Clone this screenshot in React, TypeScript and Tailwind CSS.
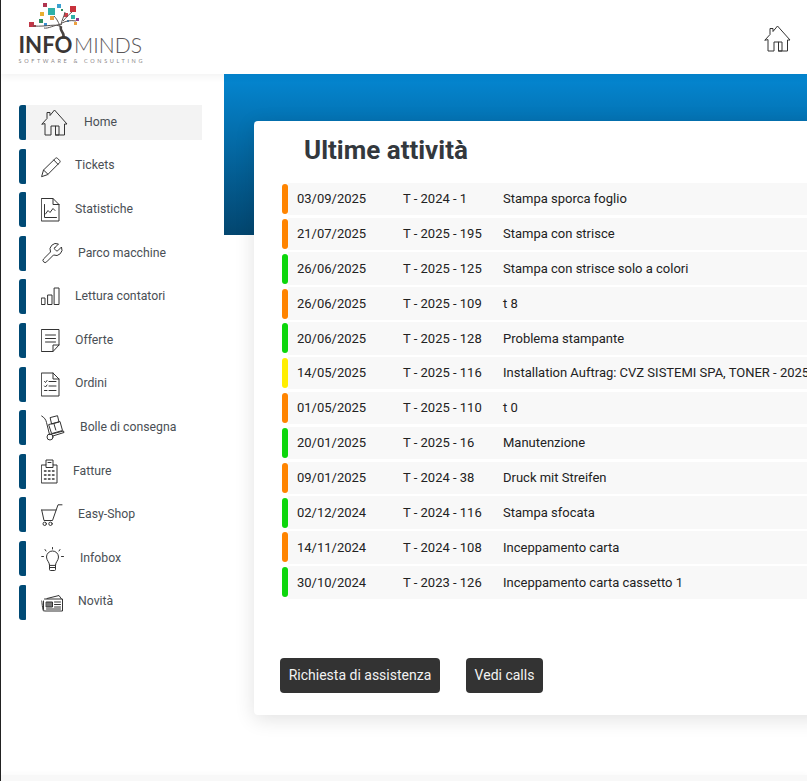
import React from "react";

const stroke = { fill: "none", stroke: "#333", strokeWidth: 1, strokeLinejoin: "round" as const, strokeLinecap: "round" as const };

function HomeIcon() {
  return (
    <svg width="27" height="27" viewBox="0 0 27 27" {...stroke}>
      <path d="M1 15 L6 9.500 V3.500 H9 V6.500 L13.500 1 L26 15 H23.500 V26 H14.500 V17 H10 V26 H4 V15 Z" />
      <path d="M14.500 26 H18 V17 H14.500" />
    </svg>
  );
}

const icons: Record<string, React.ReactNode> = {
  Home: <HomeIcon />,
  Tickets: (
    <svg width="27" height="27" viewBox="0 0 27 27" {...stroke}>
      <path d="M.7 23.300 L2.500 17 L14.500 5.300 a1.500 1.500 0 0 1 2 0 l2.200 2.200 a1.500 1.500 0 0 1 0 2 L7 21.300 Z" />
      <path d="M2.500 17 L7 21.300 M12.800 7 L17 11.300" />
    </svg>
  ),
  Statistiche: (
    <svg width="27" height="27" viewBox="0 0 27 27" {...stroke}>
      <path d="M.7 2.500 H12 L18 8.500 V25 H.7 Z M12 2.500 V8.500 H18" />
      <path d="M3.500 8.500 V21.500 H15.500 M4.500 18 L7 14.500 L9 16.500 L12 12.500 L14 14.500" />
    </svg>
  ),
  "Parco macchine": (
    <svg width="27" height="27" viewBox="0 0 27 27" {...stroke}>
      <g transform="translate(-1 1.500)">
        <path d="M14.700 6.300a1 1 0 0 0 0 1.400l1.600 1.600a1 1 0 0 0 1.400 0l3.770-3.770a6 6 0 0 1-7.940 7.940l-6.910 6.910a2.120 2.120 0 0 1-3-3l6.910-6.910a6 6 0 0 1 7.940-7.940l-3.760 3.760z" />
      </g>
    </svg>
  ),
  "Lettura contatori": (
    <svg width="27" height="27" viewBox="0 0 27 27" {...stroke}>
      <rect x=".7" y="15" width="3.300" height="6.500" />
      <rect x="7" y="12" width="4" height="9.500" />
      <rect x="13.500" y="5" width="4.500" height="16.500" />
    </svg>
  ),
  Offerte: (
    <svg width="27" height="27" viewBox="0 0 27 27" {...stroke}>
      <path d="M.7 2.500 H18 V18 L12 24.500 H.7 Z M18 18 H12 V24.500" />
      <path d="M4.500 8 H14.500 M4.500 11.500 H14.500 M4.500 15 H14.500" />
    </svg>
  ),
  Ordini: (
    <svg width="27" height="27" viewBox="0 0 27 27" {...stroke}>
      <path d="M.7 2 H12 L18 8 V25 H.7 Z M12 2 V8 H18" />
      <path d="M3.500 10.500 L4.500 11.500 L6 9.500 M8 10.500 H15 M3.500 15 L4.500 16 L6 14 M8 15 H15 M3.500 19.500 H6 M8 19.500 H15" />
    </svg>
  ),
  "Bolle di consegna": (
    <svg width="27" height="27" viewBox="0 0 27 27" {...stroke}>
      <path d="M.7 2 C3.500 3.500 5 6 5.500 8.500 L8.500 20.500" />
      <circle cx="9" cy="23" r="3" />
      <path d="M11.800 22 L23 18.500 L22.500 17 L9 20.500" />
      <path d="M8 10.500 L19 7.500 L21.500 16.500 L11 19.500 Z" />
      <path d="M9.500 3.500 L16.500 1.700 L18 8 L11 10 Z M13 10 L14.800 16" />
    </svg>
  ),
  Fatture: (
    <svg width="27" height="27" viewBox="0 0 27 27" {...stroke}>
      <path d="M.7 7 H5 V2 H12 V7 H16 V25 H.7 Z M5 7 V9.500 H12 V7 M7 4.500 H10" />
      <path d="M3.500 13 H5 M7.500 13 H9 M11.500 13 H13 M3.500 17 H5 M7.500 17 H9 M11.500 17 H13 M3.500 21 H5 M7.500 21 H9 M11.500 21 H13" strokeWidth="1.500" />
    </svg>
  ),
  "Easy-Shop": (
    <svg width="27" height="27" viewBox="0 0 27 27" {...stroke}>
      <path d="M.7 9 H15 M.7 9 L3 19.500 H11.500 L17 3.800 H21" />
      <circle cx="3.700" cy="22.800" r="1.700" />
      <circle cx="9.500" cy="22.800" r="1.700" />
    </svg>
  ),
  Infobox: (
    <svg width="27" height="27" viewBox="0 0 27 27" {...stroke}>
      <path d="M8.500 20 C8.500 17 5.500 15.500 5.500 12 a6 6 0 0 1 12 0 C17.500 15.500 14.500 17 14.500 20 Z" />
      <path d="M8.500 20 V24.500 a1 1 0 0 0 1 1 H13.500 a1 1 0 0 0 1 -1 V20 M8.500 22.500 H14.500" />
      <path d="M.7 11.500 H2.500 M20.500 11.500 H22.500 M4 4.500 L5 6 M19 4.500 L18 6 M11.500 2.500 V4" />
    </svg>
  ),
  "Novità": (
    <svg width="27" height="27" viewBox="0 0 27 27" {...stroke}>
      <path d="M3.500 10 H21.500 V22 H4 C3 22 2.500 21 2.500 20 V12 M.7 12 C1.200 13 1.200 20 2.500 22" />
      <path d="M6 9.500 L18 6.500 L20.500 10" />
      <path d="M5.500 13 H11.500 V18 H5.500 Z" fill="#777" />
      <path d="M5.500 20 H19.500 M13.500 13 H19.500 M13.500 15.500 H19.500 M13.500 18 H19.500" />
    </svg>
  ),
};

const menu = [
  { label: "Home", textClass: "ml-[16px]" },
  { label: "Tickets", textClass: "ml-[7px]" },
  { label: "Statistiche", textClass: "ml-[7px]" },
  { label: "Parco macchine", textClass: "ml-[10px]" },
  { label: "Lettura contatori", textClass: "ml-[7px]" },
  { label: "Offerte", textClass: "ml-[7px]" },
  { label: "Ordini", textClass: "ml-[7px]" },
  { label: "Bolle di consegna", textClass: "ml-[12px]" },
  { label: "Fatture", textClass: "ml-[5px]" },
  { label: "Easy-Shop", textClass: "ml-[10px]" },
  { label: "Infobox", textClass: "ml-[12px]" },
  { label: "Novità", textClass: "ml-[10px]" },
];

const orange = "bg-[#ff8400]";
const green = "bg-[#0cd60c]";
const yellow = "bg-[#ffee00]";

const rows = [
  { date: "03/09/2025", code: "T - 2024 - 1", title: "Stampa sporca foglio", color: orange },
  { date: "21/07/2025", code: "T - 2025 - 195", title: "Stampa con strisce", color: orange },
  { date: "26/06/2025", code: "T - 2025 - 125", title: "Stampa con strisce solo a colori", color: green },
  { date: "26/06/2025", code: "T - 2025 - 109", title: "t 8", color: orange },
  { date: "20/06/2025", code: "T - 2025 - 128", title: "Problema stampante", color: green },
  { date: "14/05/2025", code: "T - 2025 - 116", title: "Installation Auftrag: CVZ SISTEMI SPA, TONER - 2025", color: yellow },
  { date: "01/05/2025", code: "T - 2025 - 110", title: "t 0", color: orange },
  { date: "20/01/2025", code: "T - 2025 - 16", title: "Manutenzione", color: green },
  { date: "09/01/2025", code: "T - 2024 - 38", title: "Druck mit Streifen", color: orange },
  { date: "02/12/2024", code: "T - 2024 - 116", title: "Stampa sfocata", color: green },
  { date: "14/11/2024", code: "T - 2024 - 108", title: "Inceppamento carta", color: orange },
  { date: "30/10/2024", code: "T - 2023 - 126", title: "Inceppamento carta cassetto 1", color: green },
];

const leaves = [
  [43, 3, 4, "#b0344f"], [57, 4, 4, "#3aa0d0"], [70, 6, 6, "#c8323c"], [48, 8, 7, "#2fb0a8"],
  [40, 12, 4, "#e8b030"], [64, 13, 4, "#d0404a"], [71, 15, 4, "#2fb0a8"], [39, 19, 4, "#2f8f5f"],
  [50, 16, 4, "#eda040"], [76, 18, 3, "#8a3a90"], [29, 22, 5, "#c03848"], [44, 23, 3, "#3a8fd0"],
  [74, 22, 3, "#eda040"], [34, 25, 2, "#c03848"], [61, 9, 2, "#2f8f5f"], [67, 20, 2, "#3a8fd0"],
] as const;

function Logo() {
  return (
    <svg width="130" height="66" viewBox="0 0 130 66" className="ml-[17px]">
      {leaves.map(([x, y, s, c], i) => (
        <rect key={i} x={x - 18} y={y - 1} width={s} height={s} fill={c} />
      ))}
      {/* tree branches */}
      <path
        d="M43 26 C38 22 30 26 15 25 M42 25 C40 20 38 17 36 15 M43 24 C44 18 46 16 47 11 M44 22 C48 20 52 19 58 20 M45 20 C48 17 50 14 54 11 M44 23 C36 24 30 28 26 27"
        fill="none"
        stroke="#5a5452"
        strokeWidth="1"
      />
      <path d="M45 37 C48 32 41 31 43 25" fill="none" stroke="#4a4442" strokeWidth="2.500" />
      <text x=".5" y="51.700" textLength="54" lengthAdjust="spacingAndGlyphs" fontFamily="Lato, sans-serif" fontWeight="700" fontSize="22" fill="#3a3635">
        INFO
      </text>
      <text x="56" y="51.700" textLength="68" lengthAdjust="spacingAndGlyphs" fontFamily="Lato, sans-serif" fontWeight="300" fontSize="22" fill="#5a5658">
        MINDS
      </text>
      <text x=".5" y="62" textLength="124" fontFamily="Lato, sans-serif" fontSize="5.500" fill="#8a8688">
        SOFTWARE &amp; CONSULTING
      </text>
    </svg>
  );
}

export default function App() {
  return (
    <div className="w-[807px] h-[781px] overflow-hidden bg-white border-l border-[#222] flex flex-col [font-family:Roboto,sans-serif]">
      {/* Header */}
      <header className="h-[74px] shrink-0 flex items-start justify-between bg-white shadow-[0_2px_8px_rgba(0,0,0,0.06)] relative z-10">
        <div className="pt-[1px]">
          <Logo />
        </div>
        <div className="mt-[25px] mr-[16px]">
          <HomeIcon />
        </div>
      </header>

      <div className="flex flex-1 min-h-0">
        {/* Sidebar */}
        <nav className="w-[223px] shrink-0 pt-[31px] pl-[18px] flex flex-col gap-[8.6px]">
          {menu.map((item) => (
            <div key={item.label} className="flex h-[35px] w-[183px]">
              <div className="w-[7px] h-full rounded-l-[3px] rounded-r-[1px] bg-[#004a75]" />
              <div className={`flex flex-1 items-center pl-[15px] ${item.label === "Home" ? "bg-[#f3f3f3]" : ""}`}>
                <span className="w-[27px] h-[27px] shrink-0">{icons[item.label]}</span>
                <span className={`${item.textClass} pb-[1px] text-[12.25px] text-[#4a4f55] whitespace-nowrap`}>{item.label}</span>
              </div>
            </div>
          ))}
        </nav>

        {/* Main */}
        <main className="flex-1 min-w-0">
          <div className="h-[161px] bg-gradient-to-b from-[#0487d2] to-[#03466f]" />
          <div className="relative -mt-[114px] ml-[30px] -mr-[20px] h-[594px] rounded-[4px] bg-white shadow-[0_4px_20px_rgba(0,0,0,0.12)] overflow-hidden">
            <h1 className="pl-[50px] pt-[14px] h-[63px] text-[26px] leading-[30px] font-bold text-[#33383d]">Ultime attività</h1>
            <div className="flex flex-col gap-[4.85px] pl-[28px]">
              {rows.map((row) => (
                <div key={row.date + row.code} className="flex h-[30px] items-center">
                  <div className={`w-[6px] h-full shrink-0 rounded-[3px] ${row.color}`} />
                  <div className="flex flex-1 min-w-0 h-[32.5px] items-center bg-[#f8f8f8] text-[13px] text-[#222] whitespace-nowrap">
                    <span className="w-[115px] pl-[9px] shrink-0">{row.date}</span>
                    <span className="w-[100px] shrink-0">{row.code}</span>
                    <span>{row.title}</span>
                  </div>
                </div>
              ))}
            </div>
            <div className="flex gap-[26px] pl-[26px] mt-[60.6px]">
              <button className="h-[35px] w-[160px] rounded-[4px] bg-[#333] text-[14px] text-[#f2f2f2]">Richiesta di assistenza</button>
              <button className="h-[35px] w-[77px] rounded-[4px] bg-[#333] text-[14px] text-[#f2f2f2]">Vedi calls</button>
            </div>
          </div>
        </main>
      </div>
      <footer className="h-[6px] shrink-0 bg-[#f8f8f8] shadow-[0_-2px_4px_rgba(0,0,0,0.02)]" />
    </div>
  );
}
